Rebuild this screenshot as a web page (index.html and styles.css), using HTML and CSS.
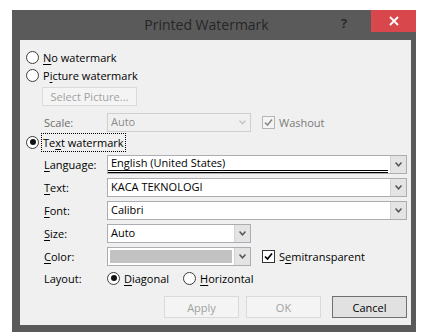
FILE: index.html
```html
<!DOCTYPE html>
<html lang="en">
<head>
    <meta charset="UTF-8">
    <title>Printed Watermark</title>
    <link rel="stylesheet" href="styles.css">
</head>
<body>
    <div class="dialog">
        <div class="titlebar">
            <span class="title">Printed Watermark</span>
            <span class="help">?</span>
            <span class="close">
                <svg width="10" height="10" viewBox="0 0 10 10"><path d="M1 1 L9 9 M9 1 L1 9" stroke="#fff" stroke-width="1.8"/></svg>
            </span>
        </div>
        <div class="content">
            <div class="row radio-row first">
                <span class="radio"></span>
                <span class="txt"><u>N</u>o watermark</span>
            </div>
            <div class="row radio-row">
                <span class="radio"></span>
                <span class="txt">P<u>i</u>cture watermark</span>
            </div>
            <div class="row pic-row">
                <span class="btn disabled small">Select Picture...</span>
            </div>
            <div class="row field-row scale-row">
                <span class="label muted-label">Scale:</span>
                <span class="combo narrow disabled-combo">
                    <span class="value">Auto</span>
                    <span class="arrow"><svg width="7" height="5" viewBox="0 0 7 5"><path d="M0.5 0.5 L3.5 3.8 L6.5 0.5" fill="none" stroke="#c4c4c4" stroke-width="1.3"/></svg></span>
                </span>
                <span class="check disabled-check"><svg width="11" height="11" viewBox="0 0 11 11"><path d="M2 5.5 L4.5 8 L9 2.5" fill="none" stroke="#8a8a8a" stroke-width="1.6"/></svg></span>
                <span class="txt muted">Washout</span>
            </div>
            <div class="row radio-row text-wm">
                <span class="radio on"></span>
                <span class="txt focus">Te<u>x</u>t watermark</span>
            </div>
            <div class="row field-row lang-row">
                <span class="label"><u>L</u>anguage:</span>
                <span class="combo wide">
                    <span class="value dbl">English (United States)</span>
                    <span class="arrow"><svg width="7" height="5" viewBox="0 0 7 5"><path d="M0.5 0.5 L3.5 3.8 L6.5 0.5" fill="none" stroke="#555" stroke-width="1.5"/></svg></span>
                </span>
            </div>
            <div class="row field-row">
                <span class="label"><u>T</u>ext:</span>
                <span class="combo wide">
                    <span class="value">KACA TEKNOLOGI</span>
                    <span class="arrow"><svg width="7" height="5" viewBox="0 0 7 5"><path d="M0.5 0.5 L3.5 3.8 L6.5 0.5" fill="none" stroke="#555" stroke-width="1.5"/></svg></span>
                </span>
            </div>
            <div class="row field-row">
                <span class="label"><u>F</u>ont:</span>
                <span class="combo wide">
                    <span class="value">Calibri</span>
                    <span class="arrow"><svg width="7" height="5" viewBox="0 0 7 5"><path d="M0.5 0.5 L3.5 3.8 L6.5 0.5" fill="none" stroke="#555" stroke-width="1.5"/></svg></span>
                </span>
            </div>
            <div class="row field-row">
                <span class="label"><u>S</u>ize:</span>
                <span class="combo narrow">
                    <span class="value">Auto</span>
                    <span class="arrow"><svg width="7" height="5" viewBox="0 0 7 5"><path d="M0.5 0.5 L3.5 3.8 L6.5 0.5" fill="none" stroke="#555" stroke-width="1.5"/></svg></span>
                </span>
            </div>
            <div class="row field-row">
                <span class="label"><u>C</u>olor:</span>
                <span class="combo narrow">
                    <span class="swatch"></span>
                    <span class="arrow"><svg width="7" height="5" viewBox="0 0 7 5"><path d="M0.5 0.5 L3.5 3.8 L6.5 0.5" fill="none" stroke="#555" stroke-width="1.5"/></svg></span>
                </span>
                <span class="check"><svg width="11" height="11" viewBox="0 0 11 11"><path d="M2 5.5 L4.5 8 L9 2.5" fill="none" stroke="#000" stroke-width="1.7"/></svg></span>
                <span class="txt">S<u>e</u>mitransparent</span>
            </div>
            <div class="row field-row layout-row">
                <span class="label">Layout:</span>
                <span class="radio on"></span>
                <span class="txt"><u>D</u>iagonal</span>
                <span class="radio second"></span>
                <span class="txt"><u>H</u>orizontal</span>
            </div>
            <div class="buttons">
                <span class="btn disabled">Apply</span>
                <span class="btn disabled ok">OK</span>
                <span class="btn cancel">Cancel</span>
            </div>
        </div>
    </div>
</body>
</html>
```

FILE: styles.css
```css
body {
    margin: 0;
    background-color: #ffffff;
    font-family: "Open Sans", "Noto Sans", sans-serif;
    font-size: 11px;
    color: #000000;
}

.dialog {
    margin: 10px 0 0 12px;
    width: 391px;
    height: 322px;
    padding: 0 5px 0 8px;
    background-color: #5a5a5a;
}

.titlebar {
    height: 30px;
    display: flex;
    align-items: flex-start;
}

.title {
    flex: 1;
    text-align: center;
    padding-left: 52px;
    line-height: 30px;
    font-size: 14px;
    color: #262626;
}

.help {
    width: 16px;
    margin-right: 14px;
    line-height: 26px;
    font-size: 13px;
    font-weight: bold;
    color: #2a2a2a;
}

.close {
    width: 45px;
    height: 22px;
    margin-right: -5px;
    background-color: #d8474b;
    display: flex;
    align-items: center;
    justify-content: center;
}

.content {
    height: 285px;
    background-color: #f0f0f0;
    padding: 8px 4px 0 6px;
    box-sizing: border-box;
}

.row {
    display: flex;
    align-items: center;
}

.radio-row {
    height: 18px;
}

.radio {
    width: 11px;
    height: 11px;
    border: 1px solid #3c3c3c;
    border-radius: 50%;
    background-color: #ffffff;
    margin-right: 4px;
    display: flex;
    align-items: center;
    justify-content: center;
    flex-shrink: 0;
}

.radio.on::after {
    content: "";
    width: 6px;
    height: 6px;
    border-radius: 50%;
    background-color: #111111;
}

.txt u, .label u {
    text-decoration-thickness: 1px;
    text-underline-offset: 2px;
}

.pic-row {
    height: 18px;
    margin-top: 3px;
    padding-left: 16px;
}

.btn {
    box-sizing: border-box;
    height: 22px;
    width: 75px;
    display: flex;
    align-items: center;
    justify-content: center;
    border: 1px solid #adadad;
    background-color: #e1e1e1;
}

.btn.small {
    width: 95px;
    height: 19px;
}

.btn.disabled {
    background-color: #f4f4f4;
    border-color: #dadada;
    color: #a2a2a2;
}

.field-row {
    height: 19px;
    margin-top: 4px;
}

.scale-row {
    margin-top: 8px;
}

.label {
    width: 63px;
    padding-left: 18px;
    flex-shrink: 0;
}

.muted-label {
    color: #6d6d6d;
}

.combo {
    box-sizing: border-box;
    height: 19px;
    display: flex;
    align-items: stretch;
    border: 1px solid #abadb3;
    background-color: #ffffff;
}

.combo.wide {
    width: 300px;
}

.combo.narrow {
    width: 144px;
}

.value {
    flex: 1;
    padding-left: 3px;
    line-height: 16px;
    white-space: nowrap;
}

.value.dbl {
    border-bottom: 3px double #000000;
    line-height: 14px;
    margin-right: 2px;
}

.arrow {
    width: 15px;
    background-color: #e4e4e4;
    border-left: 1px solid #d4d4d4;
    display: flex;
    align-items: center;
    justify-content: center;
}

.disabled-combo {
    background-color: #f0f0f0;
    border-color: #cfcfcf;
    color: #8c8c8c;
}

.disabled-combo .arrow {
    background-color: #f0f0f0;
    border-left: none;
}

.swatch {
    flex: 1;
    margin: 2px 2px 2px 2px;
    background-color: #c2c2c2;
}

.check {
    box-sizing: border-box;
    width: 13px;
    height: 13px;
    margin-left: 11px;
    margin-right: 4px;
    border: 1px solid #333333;
    background-color: #ffffff;
    display: flex;
    align-items: center;
    justify-content: center;
}

.disabled-check {
    border-color: #b5b5b5;
    background-color: #f4f4f4;
}

.muted {
    color: #7a7a7a;
}

.text-wm {
    margin-top: 1px;
}

.focus {
    outline: 1px dotted #000000;
    outline-offset: 1px;
}

.layout-row {
    height: 18px;
    margin-top: 3px;
}

.layout-row .radio {
    margin-left: 0;
}

.layout-row .second {
    margin-left: 14px;
}

.buttons {
    display: flex;
    justify-content: flex-end;
    margin-top: 9px;
}

.buttons .btn {
    margin-left: 7px;
}

.buttons .cancel {
    margin-left: 11px;
    border-color: #707070;
}
```
